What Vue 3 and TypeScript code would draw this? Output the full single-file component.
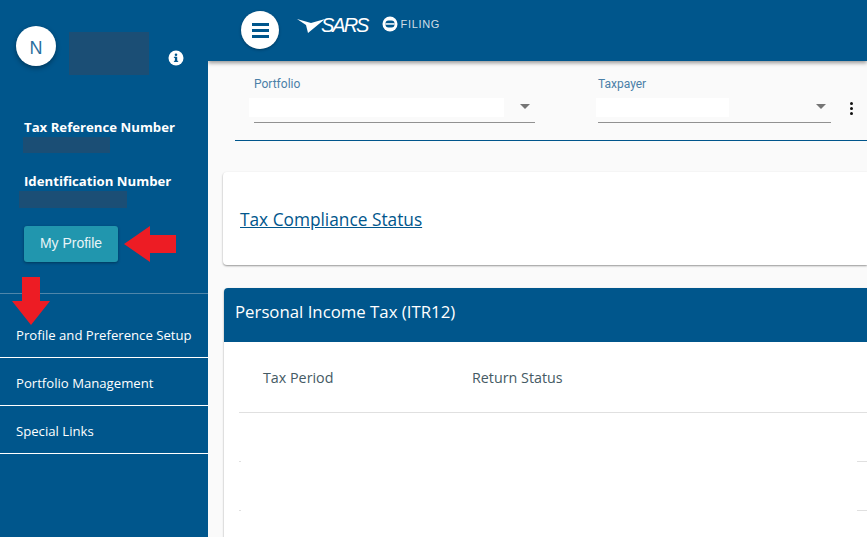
<template>
  <div class="page">
    <aside class="sidebar">
      <div class="user">
        <div class="avatar">N</div>
        <div class="mask mask-name"></div>
        <svg class="info" viewBox="0 0 16 16" width="16" height="16">
          <circle cx="8" cy="8" r="7.5" fill="#fff" />
          <rect x="6.9" y="6.8" width="2.3" height="5" fill="#00568c" />
          <rect x="5.9" y="6.8" width="2" height="1.1" fill="#00568c" />
          <rect x="5.9" y="10.8" width="4.3" height="1.1" fill="#00568c" />
          <circle cx="8" cy="4.7" r="1.3" fill="#00568c" />
        </svg>
      </div>
      <div class="details">
        <div class="label">Tax Reference Number</div>
        <div class="mask mask-ref"></div>
        <div class="label label-id">Identification Number</div>
        <div class="mask mask-id"></div>
        <button class="profile-btn">My Profile</button>
      </div>
      <nav class="menu">
        <a v-for="item in menu" :key="item" class="menu-item">{{ item }}</a>
      </nav>
      <svg class="arrow arrow-left" viewBox="0 0 52 36" width="52" height="36">
        <polygon points="0,18 26,0 26,9 52,9 52,27 26,27 26,36" fill="#ed1c24" />
      </svg>
      <svg class="arrow arrow-down" viewBox="0 0 38 48" width="38" height="48">
        <polygon points="10,0 28,0 28,24 38,24 19,48 0,24 10,24" fill="#ed1c24" />
      </svg>
    </aside>

    <div class="content">
      <header class="topbar">
        <button class="burger">
          <span></span><span></span><span></span>
        </button>
        <div class="sars">
          <svg viewBox="0 0 32 16" width="32" height="16">
            <path d="M0 1 L14 5 L28 1 L11 15 L9 7 Z" fill="#fff" />
          </svg>
          <span>SARS</span>
        </div>
        <div class="efiling">
          <svg viewBox="0 0 16 16" width="16" height="16">
            <circle cx="8" cy="8" r="7.5" fill="#fff" />
            <rect x="3.5" y="4.5" width="9" height="7" rx="3" fill="#00568c" />
            <rect x="3.5" y="7.2" width="9" height="1.5" fill="#fff" />
          </svg>
          <span>FILING</span>
        </div>
      </header>

      <main class="main">
        <section class="filters">
          <div class="field field-portfolio">
            <label>Portfolio</label>
            <div class="select">
              <div class="select-value value-portfolio"></div>
              <i class="caret"></i>
            </div>
          </div>
          <div class="field field-taxpayer">
            <label>Taxpayer</label>
            <div class="select">
              <div class="select-value value-taxpayer"></div>
              <i class="caret"></i>
            </div>
          </div>
          <div class="kebab"><i></i><i></i><i></i></div>
        </section>

        <section class="card compliance">
          <a class="compliance-link">Tax Compliance Status</a>
        </section>

        <section class="card returns">
          <h2 class="returns-title">Personal Income Tax (ITR12)</h2>
          <div class="table">
            <div class="table-head">
              <span class="col-period">Tax Period</span>
              <span>Return Status</span>
            </div>
            <div v-for="n in 2" :key="n" class="table-row">
              <i class="tick tick-left"></i>
              <i class="tick tick-right"></i>
            </div>
          </div>
        </section>
      </main>
    </div>
  </div>
</template>

<script setup lang="ts">
const menu: string[] = [
  'Profile and Preference Setup',
  'Portfolio Management',
  'Special Links'
]
</script>

<style>
html,
body {
  margin: 0;
  overflow: hidden;
}
</style>

<style scoped>
.page {
  display: flex;
  width: 867px;
  height: 537px;
  overflow: hidden;
  font-family: 'Open Sans', sans-serif;
  background: #fafafa;
}
.sidebar {
  position: relative;
  flex: 0 0 208px;
  background: #00568c;
  color: #fff;
  z-index: 2;
}
.user {
  display: flex;
  align-items: flex-start;
  padding: 26px 0 0 16px;
  height: 64px;
  box-sizing: content-box;
}
.avatar {
  width: 40px;
  height: 40px;
  padding-top: 4px;
  box-sizing: border-box;
  border-radius: 50%;
  background: #fff;
  color: #2a6f9e;
  display: flex;
  align-items: center;
  justify-content: center;
  font: 18px 'Liberation Sans', Arial, sans-serif;
  box-shadow: 0 2px 5px rgba(0, 0, 0, 0.35);
}
.mask {
  background: #1b4e75;
}
.mask-name {
  width: 80px;
  height: 43px;
  margin: 6px 0 0 13px;
}
.info {
  margin: 24px 0 0 19px;
}
.details {
  padding: 28px 0 0 24px;
  height: 204px;
  box-sizing: border-box;
  border-bottom: 1px solid #4f86aa;
}
.label {
  font-size: 13.2px;
  font-weight: 700;
  line-height: 18px;
}
.label-id {
  margin-top: 19px;
}
.mask-ref {
  width: 87px;
  height: 16px;
  margin: 1px 0 0 -1px;
}
.mask-id {
  width: 108px;
  height: 17px;
  margin: 1px 0 0 -5px;
}
.profile-btn {
  display: block;
  width: 94px;
  height: 36px;
  margin-top: 18px;
  padding: 0 0 2px;
  border: 0;
  border-radius: 3px;
  background: #2196ae;
  color: #e8f4f7;
  font: 14px 'Liberation Sans', Arial, sans-serif;
  box-shadow: 0 1px 3px rgba(0, 0, 0, 0.35);
}
.menu {
  display: flex;
  flex-direction: column;
}
.menu-item {
  display: flex;
  align-items: center;
  height: 45px;
  padding: 2px 0 0 16px;
  font-size: 13.15px;
  border-bottom: 1px solid #fff;
}
.menu-item:first-child {
  height: 64px;
  padding-top: 18px;
  box-sizing: border-box;
}
.arrow {
  position: absolute;
}
.arrow-left {
  left: 124px;
  top: 226px;
}
.arrow-down {
  left: 12px;
  top: 277px;
}
.content {
  flex: 1;
  min-width: 0;
  display: flex;
  flex-direction: column;
}
.topbar {
  display: flex;
  align-items: center;
  flex: 0 0 61px;
  background: #00568c;
  box-shadow: 0 2px 4px rgba(0, 0, 0, 0.4);
  position: relative;
  z-index: 1;
  padding-left: 33px;
  box-sizing: border-box;
}
.burger {
  width: 38px;
  height: 38px;
  border-radius: 50%;
  border: 0;
  padding: 0;
  background: #fff;
  display: flex;
  flex-direction: column;
  align-items: center;
  justify-content: center;
  gap: 3px;
  margin-top: -1px;
  box-shadow: 0 1px 3px rgba(0, 0, 0, 0.3);
}
.burger span {
  width: 17px;
  height: 3px;
  background: #00568c;
}
.sars {
  display: flex;
  align-items: center;
  margin: -10px 0 0 18px;
  color: #fff;
}
.sars span {
  font: italic 20px 'Liberation Sans', Arial, sans-serif;
  letter-spacing: -2px;
  margin-left: -8px;
}
.efiling {
  display: flex;
  align-items: center;
  gap: 2px;
  margin: -13px 0 0 15px;
  color: #d0dde6;
}
.efiling span {
  font: 11px 'Liberation Sans', Arial, sans-serif;
  letter-spacing: 0.7px;
}
.main {
  flex: 1;
  min-height: 0;
  padding-left: 15px;
}
.filters {
  display: flex;
  height: 79px;
  margin-left: 12px;
  padding-left: 19px;
  border-bottom: 1px solid #00568c;
}
.field label {
  display: block;
  font: 12px Roboto, sans-serif;
  color: #4a80a8;
  margin-top: 16px;
  line-height: 14px;
}
.field-portfolio {
  width: 281px;
}
.field-taxpayer {
  width: 233px;
  margin-left: 63px;
}
.select {
  display: flex;
  justify-content: space-between;
  height: 24px;
  margin-top: 7px;
  border-bottom: 1px solid #919191;
}
.select-value {
  height: 19px;
  background: #fff;
}
.value-portfolio {
  width: 255px;
  margin-left: -5px;
}
.value-taxpayer {
  width: 133px;
  margin-left: -2px;
}
.caret {
  width: 0;
  height: 0;
  margin: 6px 5px 0 0;
  border-left: 5px solid transparent;
  border-right: 5px solid transparent;
  border-top: 5px solid #757575;
}
.kebab {
  display: flex;
  flex-direction: column;
  gap: 2px;
  margin: 41px 0 0 19px;
}
.kebab i {
  width: 3px;
  height: 3px;
  border-radius: 50%;
  background: #111;
}
.card {
  background: #fff;
  border-radius: 4px 0 0 4px;
  box-shadow: 0 1px 2px rgba(0, 0, 0, 0.4);
}
.compliance {
  display: flex;
  align-items: center;
  height: 93px;
  margin-top: 31px;
  padding: 1px 0 0 17px;
  box-sizing: border-box;
}
.compliance-link {
  font-size: 17.3px;
  color: #00568c;
  text-decoration: underline;
}
.returns {
  margin: 23px 0 0 1px;
  height: 260px;
}
.returns-title {
  margin: 0;
  height: 54px;
  padding: 0 0 8px 11px;
  box-sizing: border-box;
  display: flex;
  align-items: center;
  background: #00568c;
  color: #fff;
  font-size: 16.8px;
  font-weight: 400;
  border-radius: 4px 0 0 0;
}
.table {
  padding-left: 15px;
}
.table-head {
  display: flex;
  align-items: center;
  height: 70px;
  padding-left: 24px;
  font-size: 14.3px;
  color: #455a64;
  border-bottom: 1px solid #e0e0e0;
}
.col-period {
  width: 209px;
}
.table-row {
  display: flex;
  justify-content: space-between;
  align-items: flex-end;
  height: 49px;
}
.tick {
  height: 1px;
  background: #e0e0e0;
}
.tick-left {
  width: 2px;
}
.tick-right {
  width: 10px;
}
</style>
